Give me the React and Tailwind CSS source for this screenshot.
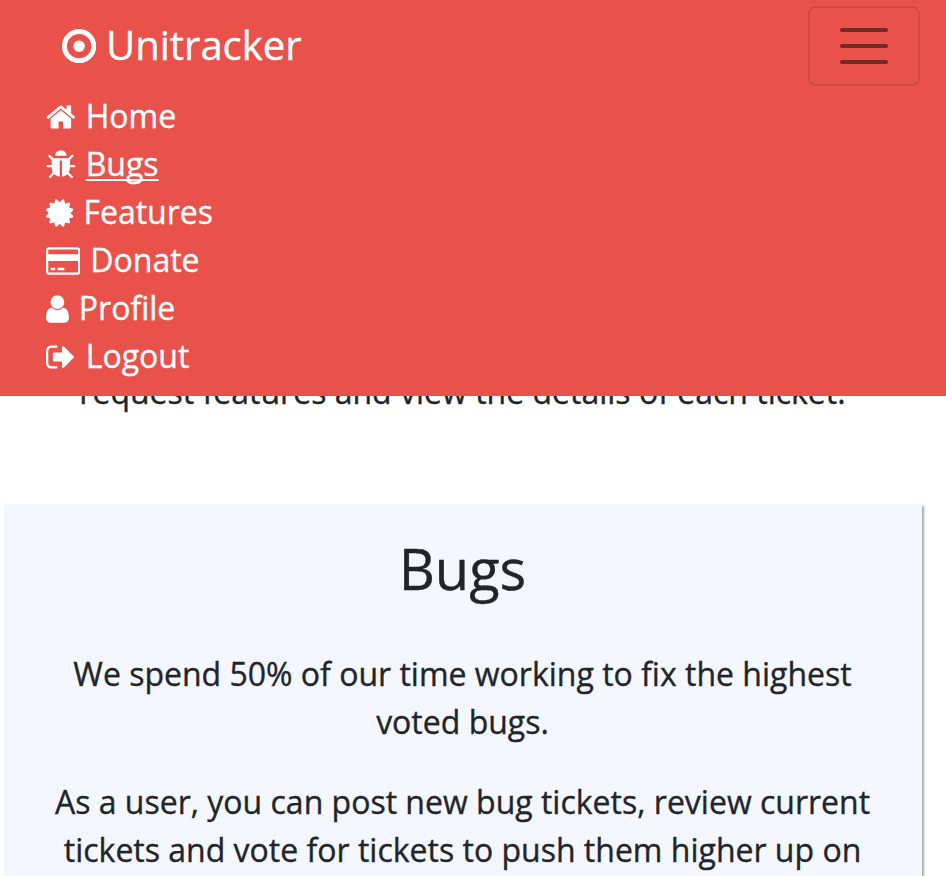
const icons = {
  home: {
    box: "64 0 1664 1792",
    size: "w-[29.7px]",
    d: "M1472 992v480q0 26-19 45t-45 19h-384v-384h-256v384h-384q-26 0-45-19t-19-45v-480q0-1 .5-3t.5-3l575-474 575 474q1 2 1 6zm223-69l-62 74q-8 9-21 11h-3q-13 0-21-7l-692-577-692 577q-12 8-24 7-13-2-21-11l-62-74q-8-10-7-23.5t11-21.5l719-599q32-26 76-26t76 26l244 204v-195q0-14 9-23t23-9h192q14 0 23 9t9 23v408l219 182q10 8 11 21.5t-7 23.5z",
  },
  bug: {
    box: "64 0 1664 1792",
    size: "w-[29.7px]",
    d: "M1696 960q0 26-19 45t-45 19h-224q0 171-67 290l208 209q19 19 19 45t-19 45q-18 19-45 19t-45-19l-198-197q-5 5-15 13t-42 28.5-65 36.5-82 29-97 13v-896h-128v896q-51 0-101.5-13.5t-87-33-66-39-43.5-32.5l-15-14-183 207q-20 21-48 21-24 0-43-16-19-18-20.5-44.5t15.5-46.5l202-227q-58-114-58-274h-224q-26 0-45-19t-19-45 19-45 45-19h224v-294l-173-173q-19-19-19-45t19-45 45-19 45 19l173 173h844l173-173q19-19 45-19t45 19 19 45-19 45l-173 173v294h224q26 0 45 19t19 45zm-480-576h-640q0-133 93.5-226.5t226.5-93.5 226.5 93.5 93.5 226.5z",
  },
  certificate: {
    box: "128 0 1536 1792",
    size: "w-[27.4px]",
    d: "M1504 896l138 135q30 28 20 70-12 41-52 51l-188 48 53 186q12 41-19 70-29 31-70 19l-186-53-48 188q-10 40-51 52-12 2-19 2-31 0-51-22l-135-138-135 138q-28 30-70 20-41-11-51-52l-48-188-186 53q-41 12-70-19-31-29-19-70l53-186-188-48q-40-10-52-51-10-42 20-70l138-135-138-135q-30-28-20-70 12-41 52-51l188-48-53-186q-12-41 19-70 29-31 70-19l186 53 48-188q10-41 51-51 41-12 70 19l135 139 135-139q29-30 70-19 41 10 51 51l48 188 186-53q41-12 70 19 31 29 19 70l-53 186 188 48q40 10 52 51 10 42-20 70z",
  },
  card: {
    box: "0 0 1920 1792",
    size: "w-[34.3px]",
    d: "M1760 128q66 0 113 47t47 113v1216q0 66-47 113t-113 47H160q-66 0-113-47T0 1504V288q0-66 47-113t113-47h1600zM160 256q-13 0-22.5 9.5T128 288v224h1664V288q0-13-9.5-22.5T1760 256H160zm1600 1280q13 0 22.5-9.5t9.5-22.5V896H128v608q0 13 9.5 22.5t22.5 9.5h1600zM256 1408v-128h256v128H256zm384 0v-128h384v128H640z",
  },
  user: {
    box: "256 0 1280 1792",
    size: "w-[22.86px]",
    d: "M1536 1399q0 109-62.5 187t-150.5 78h-854q-88 0-150.5-78t-62.5-187q0-85 8.5-160.5t31.5-152 58.5-131 94-89 134.5-34.5q131 128 313 128t313-128q76 0 134.5 34.5t94 89 58.5 131 31.5 152 8.5 160.5zm-256-887q0 159-112.5 271.5t-271.5 112.5-271.5-112.5-112.5-271.5 112.5-271.5 271.5-112.5 271.5 112.5 112.5 271.5z",
  },
  logout: {
    box: "64 0 1664 1792",
    size: "w-[29.7px]",
    d: "M704 1440q0 4 1 20t.5 26.5-3 23.5-10 19.5-20.5 6.5h-320q-119 0-203.5-84.5t-84.5-203.5v-704q0-119 84.5-203.5t203.5-84.5h320q13 0 22.5 9.5t9.5 22.5q0 4 1 20t.5 26.5-3 23.5-10 19.5-20.5 6.5h-320q-66 0-113 47t-47 113v704q0 66 47 113t113 47h312l11.5 1 11.5 3 8 5.5 7 9 2 13.5zm928-544q0 26-19 45l-544 544q-19 19-45 19t-45-19-19-45v-288h-448q-26 0-45-19t-19-45v-384q0-26 19-45t45-19h448v-288q0-26 19-45t45-19 45 19l544 544q19 19 19 45z",
  },
};

const links = [
  { label: "Home", icon: icons.home },
  { label: "Bugs", icon: icons.bug, active: true },
  { label: "Features", icon: icons.certificate },
  { label: "Donate", icon: icons.card },
  { label: "Profile", icon: icons.user },
  { label: "Logout", icon: icons.logout },
];

function NavLink({ label, icon, active }) {
  return (
    <li className="h-12">
      <a href="#" className="flex items-center gap-[10px]">
        <svg viewBox={icon.box} className={`mt-[1.5px] h-8 shrink-0 ${icon.size}`} fill="currentColor">
          <path d={icon.d} />
        </svg>
        <span className={active ? "underline decoration-2 underline-offset-[3px] [text-decoration-skip-ink:none]" : ""}>
          {label}
        </span>
      </a>
    </li>
  );
}

function Header() {
  return (
    <header className="relative z-10 h-[396px] bg-[#e9524b] pt-1.5 text-white">
      <div className="flex h-20 items-center justify-between pr-[26px] pl-[62px]">
        <a href="#" className="flex items-center gap-[9.7px] text-[40px] leading-[60px]">
          <svg viewBox="0 0 1536 1536" className="size-[34.3px]" fill="none">
            <circle cx="768" cy="768" r="656" stroke="currentColor" strokeWidth="224" />
            <circle cx="768" cy="768" r="256" fill="currentColor" />
          </svg>
          <span className="-mt-0.5">Unitracker</span>
        </a>
        <button className="flex h-20 w-28 items-center justify-center rounded-lg border-2 border-black/10">
          <svg viewBox="0 0 60 60" className="size-[60px]" stroke="rgba(0,0,0,0.5)" strokeWidth="4" strokeLinecap="round">
            <path d="M8 14h44M8 30h44M8 46h44" />
          </svg>
        </button>
      </div>
      <ul className="mt-1.5 pl-[46px]">
        {links.map((link) => (
          <NavLink key={link.label} {...link} />
        ))}
      </ul>
    </header>
  );
}

export default function App() {
  return (
    <div className="h-[876px] overflow-hidden bg-white font-['Open_Sans',sans-serif] text-[32px] leading-[48px] text-[#212529] [-webkit-text-stroke:0.35px]">
      <Header />
      <main className="-mt-7 pr-[25px] pl-1 text-center">
        <p className="whitespace-nowrap">request features and view the details of each ticket.</p>
        <section className="-mr-px mt-[88px] h-[500px] bg-[#f4f7ff] pt-[31px] pr-px shadow-[2px_2px_2px_#aaa]">
          <h2 className="text-[56px] leading-[67px]">Bugs</h2>
          <p className="mt-12 whitespace-nowrap">
            We spend 50% of our time working to fix the highest
            <br />
            voted bugs.
          </p>
          <p className="mt-8 whitespace-nowrap">
            As a user, you can post new bug tickets, review current
            <br />
            tickets and vote for tickets to push them higher up on
          </p>
        </section>
      </main>
    </div>
  );
}
